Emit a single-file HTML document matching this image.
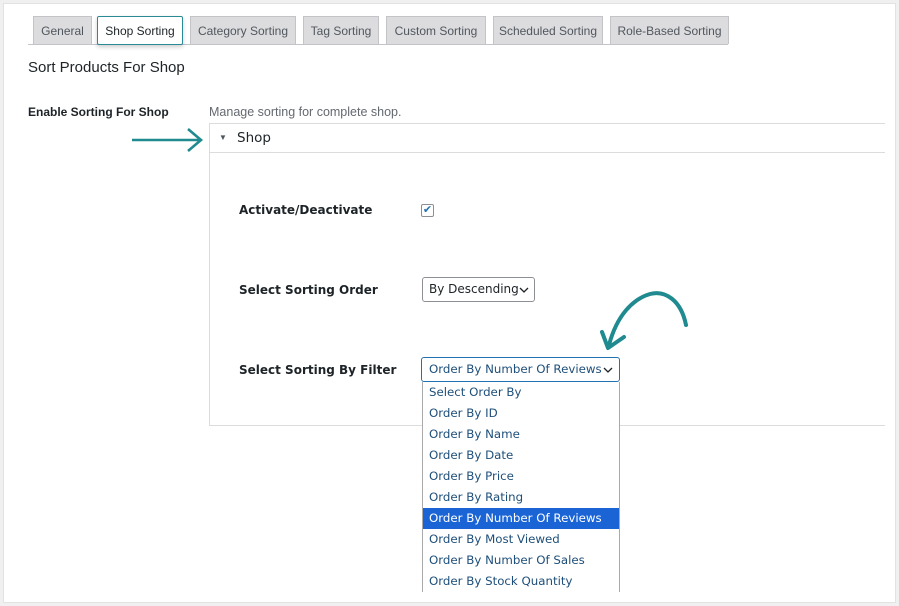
<!DOCTYPE html><html><head><style>
*{box-sizing:border-box;margin:0;padding:0}
body{width:899px;height:606px;background:#f0f0f1;font-family:"Liberation Sans","DejaVu Sans",sans-serif;position:relative;overflow:hidden}
.card{position:absolute;left:3px;top:3px;width:893px;height:600px;background:#fff;border:1px solid #e2e2e2}
.a{position:absolute;white-space:nowrap}
.tab{position:absolute;top:16px;height:28px;background:#dcdcde;border:1px solid #c3c4c7;border-bottom:none;font-size:12px;color:#50575e;text-align:center;line-height:28px}
.v{font-family:"DejaVu Sans",sans-serif;color:#1d2327}
.lbl{font-weight:bold;color:#1d2327}
.opt{position:absolute;left:0;width:196px;height:21px;line-height:21px;padding-left:6px;font-family:"DejaVu Sans",sans-serif;font-size:11.8px;color:#1e4f7a}
</style></head><body>
<div class="card"></div>
<div class="a" style="left:28px;top:44px;width:700px;height:1px;background:#c3c4c7"></div>
<div class="tab" style="left:33px;width:59px">General</div>
<div class="tab" style="left:97px;width:86px;background:#fff;border:1px solid #2a8a96;border-radius:2px;height:29px;color:#1d2327;box-shadow:0 2px 4px rgba(0,0,0,.2)">Shop Sorting</div>
<div class="tab" style="left:190px;width:106px">Category Sorting</div>
<div class="tab" style="left:303px;width:76px">Tag Sorting</div>
<div class="tab" style="left:386px;width:100px">Custom Sorting</div>
<div class="tab" style="left:493px;width:110px">Scheduled Sorting</div>
<div class="tab" style="left:610px;width:119px">Role-Based Sorting</div>
<div class="a" style="left:28px;top:59px;font-size:15px;color:#1d2327">Sort Products For Shop</div>
<div class="a lbl" style="left:28px;top:105px;font-size:12px">Enable Sorting For Shop</div>
<div class="a" style="left:209px;top:105px;font-size:12.5px;color:#646970">Manage sorting for complete shop.</div>
<div class="a" style="left:209px;top:123px;width:676px;height:303px;border:1px solid #dcdcde;border-right:none"></div>
<div class="a" style="left:209px;top:152px;width:676px;height:1px;background:#dcdcde"></div>
<div class="a" style="left:219px;top:133px;font-size:8px;color:#50575e">▼</div>
<div class="a v" style="left:237px;top:130px;font-size:13.5px">Shop</div>
<svg class="a" style="left:130px;top:126px" width="76" height="26"><path d="M2 14H70M58 3L71 14L58 25" fill="none" stroke="#1f8a8f" stroke-width="2.6"/></svg>
<div class="a lbl v" style="left:239px;top:203px;font-size:12px">Activate/Deactivate</div>
<div class="a" style="left:421px;top:204px;width:13px;height:13px;border:1px solid #8c8f94;border-radius:2px;font-size:11px;color:#2271b1;line-height:11px;text-align:center">✔</div>
<div class="a lbl v" style="left:239px;top:283px;font-size:12px">Select Sorting Order</div>
<div class="a v" style="left:422px;top:277px;width:113px;height:25px;border:1px solid #8c8f94;border-radius:3px;font-size:12px;line-height:23px;padding-left:6px">By Descending</div>
<svg class="a" style="left:519px;top:286px" width="10" height="8"><path d="M1 2L5 6L9 2" fill="none" stroke="#1d2327" stroke-width="1.3"/></svg>
<div class="a lbl v" style="left:239px;top:363px;font-size:12px">Select Sorting By Filter</div>
<div class="a" style="left:421px;top:357px;width:199px;height:25px;border:1px solid #2271b1;border-radius:3px;font-family:'DejaVu Sans',sans-serif;font-size:11.8px;line-height:23px;padding-left:7px;color:#1e4f7a;background:#fff">Order By Number Of Reviews</div>
<svg class="a" style="left:603px;top:366px" width="10" height="8"><path d="M1 2L5 6L9 2" fill="none" stroke="#1d2327" stroke-width="1.3"/></svg>
<div class="a" style="left:422px;top:382px;width:198px;height:210px;border-left:1px solid #aaa;border-right:1px solid #aaa;background:#fff">
<div class="opt" style="top:0">Select Order By</div>
<div class="opt" style="top:21px">Order By ID</div>
<div class="opt" style="top:42px">Order By Name</div>
<div class="opt" style="top:63px">Order By Date</div>
<div class="opt" style="top:84px">Order By Price</div>
<div class="opt" style="top:105px">Order By Rating</div>
<div class="opt" style="top:126px;background:#1a64d6;color:#fff">Order By Number Of Reviews</div>
<div class="opt" style="top:147px">Order By Most Viewed</div>
<div class="opt" style="top:168px">Order By Number Of Sales</div>
<div class="opt" style="top:189px">Order By Stock Quantity</div>
</div>
<svg class="a" style="left:595px;top:285px" width="100" height="75"><path d="M91 40C86 15 70 5 55 9C38 14 22 30 14 60" fill="none" stroke="#1f8a8f" stroke-width="4" stroke-linecap="round"/><path d="M7 47L13 63L29 52" fill="none" stroke="#1f8a8f" stroke-width="4" stroke-linecap="round" stroke-linejoin="round"/></svg>
</body></html>
